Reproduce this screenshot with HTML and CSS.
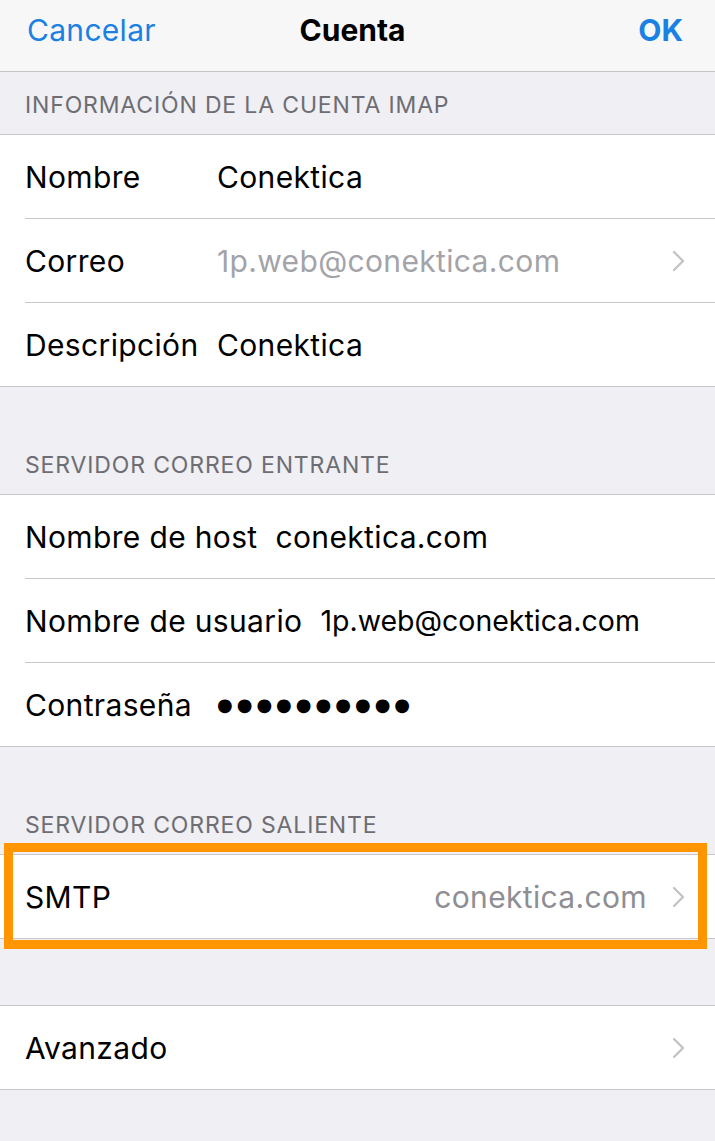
FILE: index.html
```html
<!DOCTYPE html>
<html lang="es">
<head>
<meta charset="utf-8">
<title>Cuenta</title>
<link rel="stylesheet" href="styles.css">
</head>
<body>
<div class="screen">
  <header class="nav">
    <span class="nav-btn nav-cancel">Cancelar</span>
    <span class="nav-title">Cuenta</span>
    <span class="nav-btn nav-done">OK</span>
  </header>

  <section class="section first">
    <div class="section-header">INFORMACIÓN DE LA CUENTA IMAP</div>
    <div class="group">
      <div class="row"><div class="row-inner">
        <span class="label fixed">Nombre</span><span class="value">Conektica</span>
      </div></div>
      <div class="row"><div class="row-inner">
        <span class="label fixed">Correo</span><span class="value muted">1p.web@conektica.com</span>
        <svg class="chevron" viewBox="0 0 13 22" width="13" height="22"><path d="M2 2 L11 11 L2 20" fill="none" stroke="#c2c2c7" stroke-width="2.3" stroke-linecap="round" stroke-linejoin="round"/></svg>
      </div></div>
      <div class="row"><div class="row-inner">
        <span class="label fixed">Descripción</span><span class="value">Conektica</span>
      </div></div>
    </div>
  </section>

  <section class="section">
    <div class="section-header">SERVIDOR CORREO ENTRANTE</div>
    <div class="group">
      <div class="row"><div class="row-inner">
        <span class="label fixed">Nombre de host</span><span class="value">conektica.com</span>
      </div></div>
      <div class="row"><div class="row-inner">
        <span class="label fixed">Nombre de usuario</span><span class="value shrink">1p.web@conektica.com</span>
      </div></div>
      <div class="row"><div class="row-inner">
        <span class="label fixed">Contraseña</span><span class="value dots">●●●●●●●●●●</span>
      </div></div>
    </div>
  </section>

  <section class="section">
    <div class="section-header">SERVIDOR CORREO SALIENTE</div>
    <div class="group highlighted">
      <div class="row"><div class="row-inner">
        <span class="label">SMTP</span><span class="value muted right">conektica.com</span>
        <svg class="chevron" viewBox="0 0 13 22" width="13" height="22"><path d="M2 2 L11 11 L2 20" fill="none" stroke="#c2c2c7" stroke-width="2.3" stroke-linecap="round" stroke-linejoin="round"/></svg>
      </div></div>
      <div class="highlight-box"></div>
    </div>
  </section>

  <section class="section plain">
    <div class="group">
      <div class="row"><div class="row-inner">
        <span class="label">Avanzado</span><span class="spacer"></span>
        <svg class="chevron" viewBox="0 0 13 22" width="13" height="22"><path d="M2 2 L11 11 L2 20" fill="none" stroke="#c2c2c7" stroke-width="2.3" stroke-linecap="round" stroke-linejoin="round"/></svg>
      </div></div>
    </div>
  </section>
</div>
</body>
</html>
```

FILE: styles.css
```css
* { box-sizing: border-box; }

html, body {
  margin: 0;
  padding: 0;
}

body {
  background: #efeff4;
  font-family: Inter, "Liberation Sans", sans-serif;
  color: #000;
}

.screen {
  width: 715px;
  min-height: 1141px;
  background: #efeff4;
}

.nav {
  height: 72px;
  background: #f7f7f8;
  border-bottom: 1px solid #c4c4c8;
  display: grid;
  grid-template-columns: 1fr auto 1fr;
  align-items: start;
  padding: 0 32px 0 27px;
}

.nav-btn {
  font-size: 30px;
  line-height: 60px;
  color: #1a80e2;
  letter-spacing: 0.3px;
}

.nav-cancel {
  justify-self: start;
}

.nav-done {
  justify-self: end;
  font-weight: 700;
  letter-spacing: 0;
}

.nav-title {
  font-size: 30px;
  line-height: 60px;
  font-weight: 700;
  letter-spacing: 0;
  justify-self: center;
  margin-right: 5px;
}

.section {
  margin-top: 45px;
}

.section.first {
  margin-top: 0;
}

.section.plain {
  margin-top: 66px;
}

.section-header {
  height: 62px;
  padding: 22px 0 0 25px;
  font-size: 23px;
  line-height: 22px;
  color: #6d6d72;
  letter-spacing: 0.85px;
}

.group {
  background: #fff;
  border-top: 1px solid #c8c7cc;
  border-bottom: 1px solid #c8c7cc;
}

.group.highlighted {
  position: relative;
}

.highlight-box {
  position: absolute;
  top: -12px;
  left: 4px;
  right: 8px;
  height: 106px;
  border: 9px solid #ff9500;
  pointer-events: none;
}

.row {
  padding-left: 25px;
}

.row-inner {
  height: 84px;
  display: flex;
  align-items: center;
  padding-right: 30px;
  border-top: 1px solid #c8c7cc;
}

.row:first-child .row-inner {
  height: 83px;
  border-top: none;
}

.label {
  font-size: 30px;
  letter-spacing: 0.35px;
  white-space: nowrap;
}

.label.fixed {
  min-width: 174px;
  margin-right: 18px;
}

.value {
  font-size: 30px;
  letter-spacing: 0.35px;
  white-space: nowrap;
  flex: 1;
}

.value.shrink {
  font-size: 28.5px;
  letter-spacing: 0;
}

.value.muted {
  color: #a3a3a8;
}

.value.right {
  text-align: right;
  color: #8e8e93;
  margin-right: 25px;
}

.value.dots {
  font-family: "DejaVu Sans", sans-serif;
  font-size: 18px;
  letter-spacing: 4px;
}

.spacer {
  flex: 1;
}

.chevron {
  flex: none;
  width: 13px;
  height: 22px;
}
```
